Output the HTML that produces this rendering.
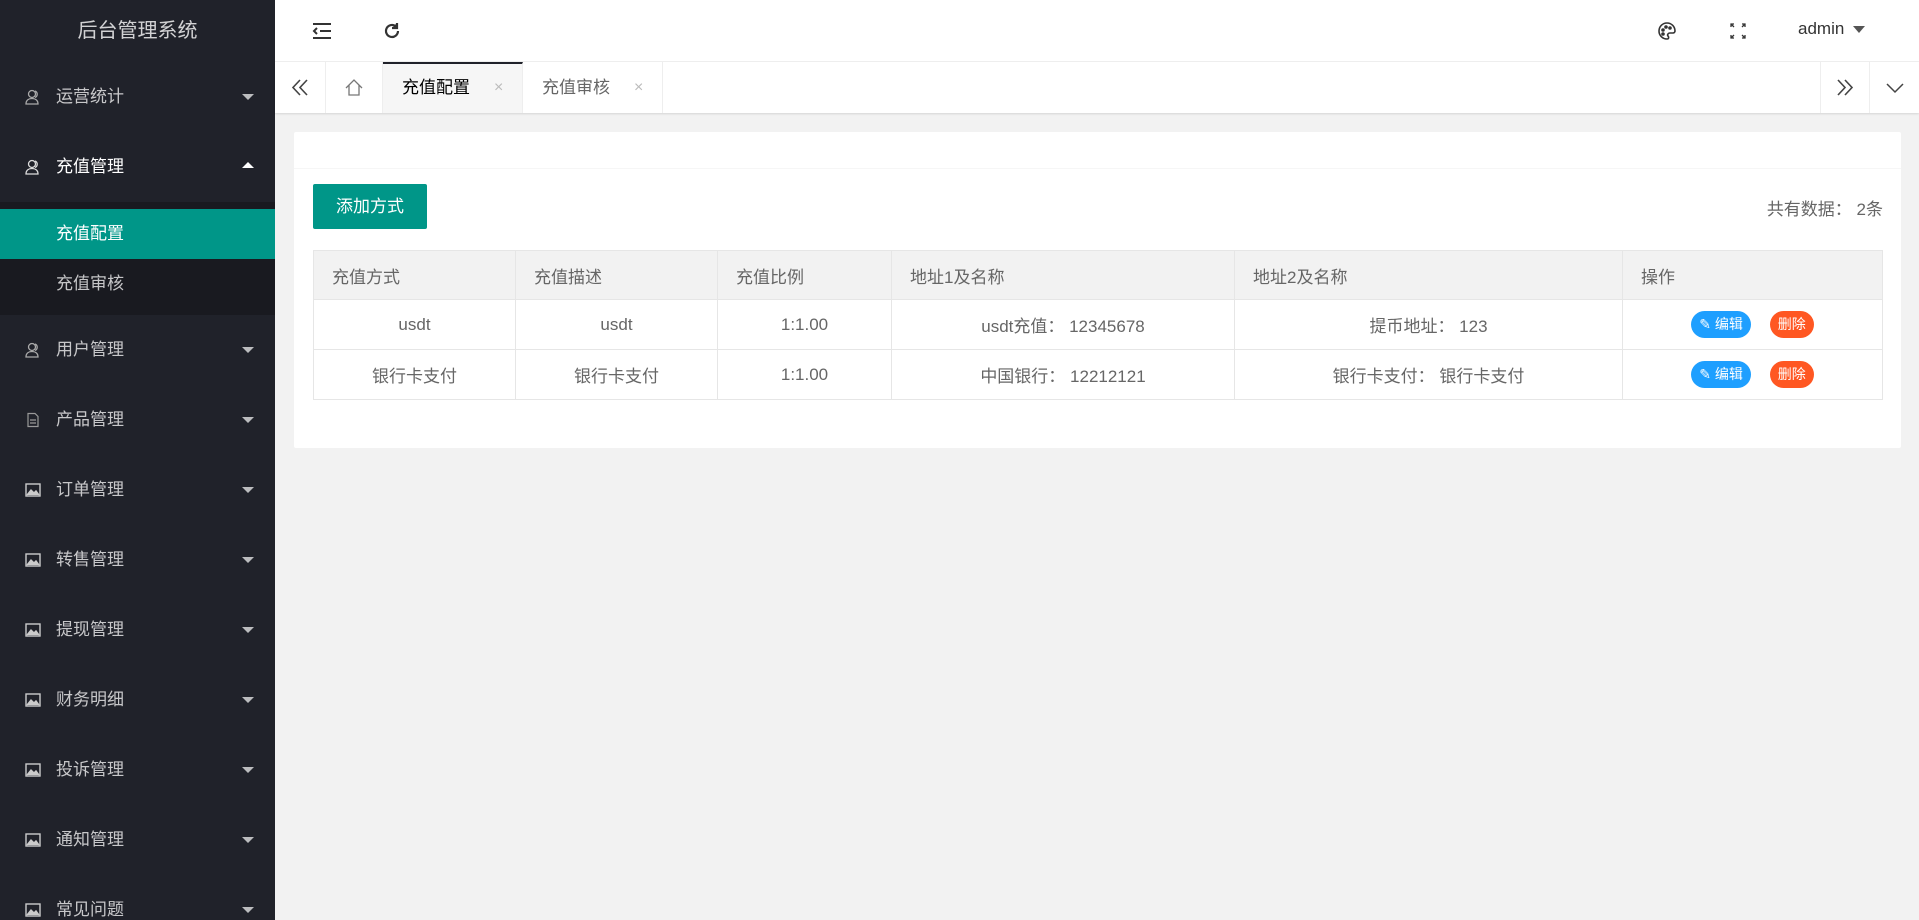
<!DOCTYPE html>
<html><head><meta charset="utf-8"><style>
*{margin:0;padding:0;box-sizing:border-box}
html{height:920px;overflow:hidden;background:#f2f2f2}
body{width:1919px;height:920px;overflow:hidden;background:#f2f2f2;font-family:"Liberation Sans","Noto Sans CJK SC",sans-serif;font-size:17px;color:#666;position:relative}
.side{position:absolute;left:0;top:0;width:275px;height:920px;background:#20222a;overflow:hidden}
.logo{height:62px;line-height:62px;text-align:center;color:rgba(255,255,255,.8);font-size:20px}
.mi{height:70px;position:relative;color:rgba(255,255,255,.75);line-height:70px;padding-left:56px}
.mi svg.ic{position:absolute;left:25px;top:27px}
.mi .ar{position:absolute;left:242px;top:32px;width:0;height:0;border-left:6px solid transparent;border-right:6px solid transparent;border-top:6px solid rgba(255,255,255,.7)}
.mi .up{border-top:0;border-bottom:6px solid #fff;top:30px}
.sub{background:#191a20;padding:7px 0 6px}
.sub div{height:50px;line-height:50px;padding-left:56px;color:rgba(255,255,255,.75)}
.sub .on{background:#009688;color:#fff}
.head{position:absolute;left:275px;top:0;right:0;height:62px;background:#fff;border-bottom:1px solid #f0f0f0}
.tabs{position:absolute;left:275px;top:62px;right:0;height:51px;background:#fff;box-shadow:0 1px 2px rgba(0,0,0,.12)}
.tb{position:absolute;top:0;height:51px;border-right:1px solid #eee;line-height:51px;text-align:center}
.card{position:absolute;left:294px;top:132px;width:1607px;height:316px;background:#fff;border-radius:2px}
table{position:absolute;left:19px;top:118px;width:1570px;border-collapse:collapse}
td,th{border:1px solid #e6e6e6;height:50px;font-weight:normal}
th{background:#f2f2f2;text-align:left;padding-left:18px;height:49px}
td{text-align:center}
.be{display:inline-block;height:27px;line-height:27px;border-radius:14px;color:#fff;font-size:14px;padding:0 8px;vertical-align:middle}
</style></head><body>
<div class="side">
<div class="logo">后台管理系统</div>
<div class="mi"><svg class="ic" width="16" height="16" viewBox="0 0 16 16" fill="none" stroke="#aaa" stroke-width="1.3"><circle cx="7" cy="5" r="3.5"/><path d="M1 15c0-4 3-5.5 6-5.5s6 1.5 6 5.5zM10 2a3.5 3.5 0 0 1 0 6.5"/></svg>运营统计<i class="ar"></i></div>
<div class="mi" style="color:#fff"><svg class="ic" width="16" height="16" viewBox="0 0 16 16" fill="none" stroke="#ddd" stroke-width="1.3"><circle cx="7" cy="5" r="3.5"/><path d="M1 15c0-4 3-5.5 6-5.5s6 1.5 6 5.5zM10 2a3.5 3.5 0 0 1 0 6.5"/></svg>充值管理<i class="ar up"></i></div>
<div class="sub"><div class="on">充值配置</div><div>充值审核</div></div>
<div class="mi"><svg class="ic" width="16" height="16" viewBox="0 0 16 16" fill="none" stroke="#aaa" stroke-width="1.3"><circle cx="7" cy="5" r="3.5"/><path d="M1 15c0-4 3-5.5 6-5.5s6 1.5 6 5.5zM10 2a3.5 3.5 0 0 1 0 6.5"/></svg>用户管理<i class="ar"></i></div>
<div class="mi"><svg class="ic" width="16" height="16" viewBox="0 0 16 16" fill="none" stroke="#999" stroke-width="1.2"><path d="M3 1.5h7l3 3v10H3zM5 8h6M5 11h6"/></svg>产品管理<i class="ar"></i></div>
<div class="mi"><svg class="ic" width="16" height="16" viewBox="0 0 16 16" fill="none" stroke="#ccc" stroke-width="1.4"><rect x="1" y="2" width="14" height="12"/><path d="M2 13l4-5 3 3 2-2 3 4" fill="#ccc"/></svg>订单管理<i class="ar"></i></div>
<div class="mi"><svg class="ic" width="16" height="16" viewBox="0 0 16 16" fill="none" stroke="#ccc" stroke-width="1.4"><rect x="1" y="2" width="14" height="12"/><path d="M2 13l4-5 3 3 2-2 3 4" fill="#ccc"/></svg>转售管理<i class="ar"></i></div>
<div class="mi"><svg class="ic" width="16" height="16" viewBox="0 0 16 16" fill="none" stroke="#ccc" stroke-width="1.4"><rect x="1" y="2" width="14" height="12"/><path d="M2 13l4-5 3 3 2-2 3 4" fill="#ccc"/></svg>提现管理<i class="ar"></i></div>
<div class="mi"><svg class="ic" width="16" height="16" viewBox="0 0 16 16" fill="none" stroke="#ccc" stroke-width="1.4"><rect x="1" y="2" width="14" height="12"/><path d="M2 13l4-5 3 3 2-2 3 4" fill="#ccc"/></svg>财务明细<i class="ar"></i></div>
<div class="mi"><svg class="ic" width="16" height="16" viewBox="0 0 16 16" fill="none" stroke="#ccc" stroke-width="1.4"><rect x="1" y="2" width="14" height="12"/><path d="M2 13l4-5 3 3 2-2 3 4" fill="#ccc"/></svg>投诉管理<i class="ar"></i></div>
<div class="mi"><svg class="ic" width="16" height="16" viewBox="0 0 16 16" fill="none" stroke="#ccc" stroke-width="1.4"><rect x="1" y="2" width="14" height="12"/><path d="M2 13l4-5 3 3 2-2 3 4" fill="#ccc"/></svg>通知管理<i class="ar"></i></div>
<div class="mi"><svg class="ic" width="16" height="16" viewBox="0 0 16 16" fill="none" stroke="#ccc" stroke-width="1.4"><rect x="1" y="2" width="14" height="12"/><path d="M2 13l4-5 3 3 2-2 3 4" fill="#ccc"/></svg>常见问题<i class="ar"></i></div>
</div>
<div class="head">
<svg style="position:absolute;left:37px;top:22px" width="20" height="18" viewBox="0 0 20 18" fill="none" stroke="#333" stroke-width="2"><path d="M1 2h18M8 9h11M1 16h18M5 6l-3 3 3 3"/></svg>
<svg style="position:absolute;left:107px;top:21px" width="20" height="20" viewBox="0 0 20 20" fill="none" stroke="#333" stroke-width="2.2"><path d="M16 10a6 6 0 1 1-2-4.5"/><path d="M15 2v5h-5" fill="#333"/></svg>
<svg style="position:absolute;left:1382px;top:21px" width="20" height="20" viewBox="0 0 20 20" fill="none" stroke="#333" stroke-width="1.6"><path d="M10 2a8 8 0 0 0 0 16c2 0 2-2 1-3s0-3 2-3h3a2 2 0 0 0 2-2A8 8 0 0 0 10 2z"/><circle cx="6" cy="9" r="1" fill="#333"/><circle cx="9" cy="6" r="1" fill="#333"/><circle cx="13" cy="7" r="1" fill="#333"/><circle cx="6" cy="13" r="1" fill="#333"/></svg>
<svg style="position:absolute;left:1455px;top:23px" width="16" height="16" viewBox="0 0 16 16" fill="none" stroke="#333" stroke-width="1.3"><path d="M1 4V1h3M1 1l3 3M15 4V1h-3M15 1l-3 3M1 12v3h3M1 15l3-3M15 12v3h-3M15 15l-3-3"/></svg>
<span style="position:absolute;left:1523px;top:19px;color:#333;font-size:17px">admin</span>
<i style="position:absolute;left:1578px;top:26px;border-left:6px solid transparent;border-right:6px solid transparent;border-top:7px solid #555"></i>
</div>
<div class="tabs">
<div class="tb" style="left:0;width:51px"><svg width="20" height="51" viewBox="0 0 20 51" fill="none" stroke="#444" stroke-width="1.6"><path d="M10 18l-7 7.5 7 7.5M17 18l-7 7.5 7 7.5"/></svg></div>
<div class="tb" style="left:51px;width:57px"><svg width="22" height="51" viewBox="0 0 22 51" fill="none" stroke="#777" stroke-width="1.3"><path d="M3 26l8-8 8 8M6 23v10h10V23"/></svg></div>
<div class="tb" style="left:108px;width:140px;background:#f6f6f6;color:#000;border-top:2px solid #20222a;line-height:47px;text-align:left;padding-left:19px">充值配置<span style="position:absolute;left:111px;color:#bbb;font-size:16px">×</span></div>
<div class="tb" style="left:248px;width:140px;text-align:left;padding-left:19px">充值审核<span style="position:absolute;left:111px;color:#bbb;font-size:16px">×</span></div>
<div class="tb" style="left:1545px;width:50px;border-left:1px solid #eee"><svg width="20" height="51" viewBox="0 0 20 51" fill="none" stroke="#444" stroke-width="1.6"><path d="M3 18l7 7.5-7 7.5M10 18l7 7.5-7 7.5"/></svg></div>
<div class="tb" style="left:1595px;width:49px;border-right:0"><svg width="20" height="51" viewBox="0 0 20 51" fill="none" stroke="#444" stroke-width="1.5"><path d="M2 22l8 8 8-8"/></svg></div>
</div>
<div class="card">
<div style="height:37px;border-bottom:1px solid #f6f6f6"></div>
<div style="position:absolute;left:19px;top:52px;width:114px;height:45px;background:#009688;border-radius:2px;color:#fff;line-height:45px;text-align:center">添加方式</div>
<div style="position:absolute;right:18px;top:63px">共有数据： 2条</div>
<table>
<tr><th style="width:202px">充值方式</th><th style="width:202px">充值描述</th><th style="width:174px">充值比例</th><th style="width:343px">地址1及名称</th><th style="width:388px">地址2及名称</th><th>操作</th></tr>
<tr><td>usdt</td><td>usdt</td><td>1:1.00</td><td>usdt充值： 12345678</td><td>提币地址： 123</td><td><span class="be" style="background:#1e9fff">✎ 编辑</span>&nbsp;&nbsp;&nbsp;&nbsp;<span class="be" style="background:#ff5722">删除</span></td></tr>
<tr><td>银行卡支付</td><td>银行卡支付</td><td>1:1.00</td><td>中国银行： 12212121</td><td>银行卡支付： 银行卡支付</td><td><span class="be" style="background:#1e9fff">✎ 编辑</span>&nbsp;&nbsp;&nbsp;&nbsp;<span class="be" style="background:#ff5722">删除</span></td></tr>
</table>
</div>
</body></html>
